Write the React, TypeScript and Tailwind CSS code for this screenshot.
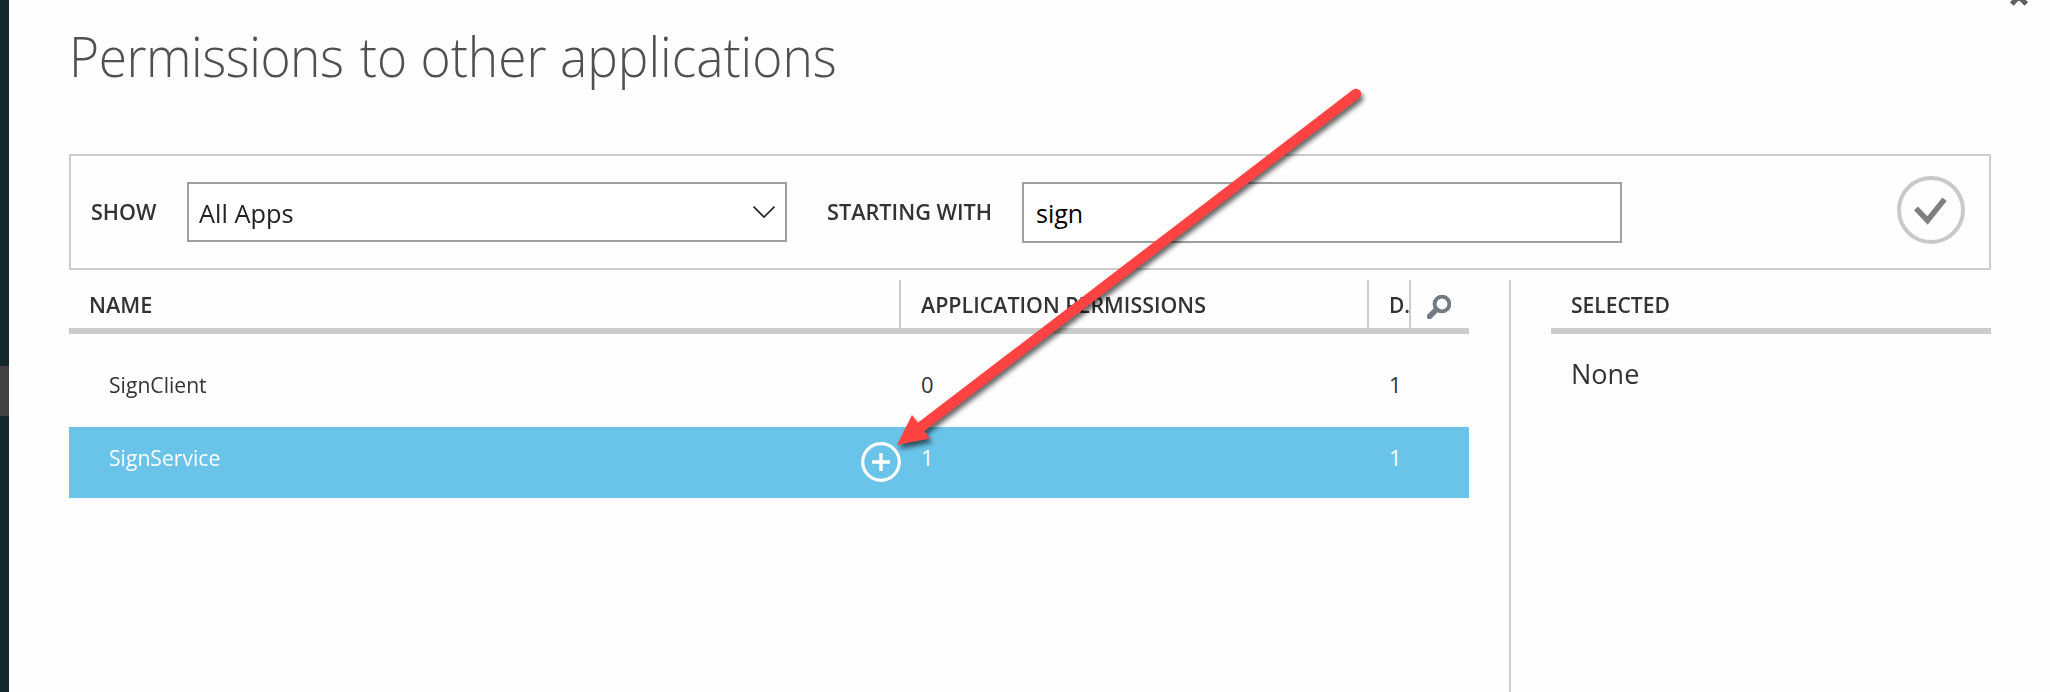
import type { ReactNode } from "react";

function Label({ children, className = "" }: { children: ReactNode; className?: string }) {
  return (
    <span className={`inline-block origin-left whitespace-nowrap text-[22px] font-semibold leading-[30px] text-[#333] ${className}`}>
      {children}
    </span>
  );
}

function Cell({ children, className = "" }: { children: ReactNode; className?: string }) {
  return <span className={`inline-block origin-left whitespace-nowrap text-[22px] leading-[30px] ${className}`}>{children}</span>;
}

function Row({ name, app, delegated, selected = false }: { name: string; app: string; delegated: string; selected?: boolean }) {
  return (
    <div className={`flex w-[1400px] items-center ${selected ? "h-[71px] bg-[#6ac3e9] pb-3 text-white" : "mt-5 h-[73px] pb-[14px] text-[#333]"}`}>
      <div className="flex w-[832px] items-center justify-between pl-[40px]">
        <Cell className="scale-x-[0.96]">{name}</Cell>
        {selected && (
          <svg className="mt-[5px] -mb-[5px]" width="40" height="40" viewBox="0 0 40 40" fill="none" stroke="#fff">
            <circle cx="20" cy="20" r="18.3" strokeWidth="3.2" />
            <path d="M11 20h18M20 11v18" strokeWidth="3.4" />
          </svg>
        )}
      </div>
      <Cell className="w-[468px] pl-[20px]">{app}</Cell>
      <Cell className="pl-[20px]">{delegated}</Cell>
    </div>
  );
}

export default function App() {
  return (
    <div className="relative flex h-[692px] w-[2050px] overflow-hidden bg-[#fefefe] font-['Open_Sans','Noto_Sans',sans-serif]">
      <aside className="w-[9px] shrink-0 bg-[#14272e] pt-[366px]">
        <div className="h-[50px] bg-[#434343]" />
      </aside>

      <main className="flex w-[1982px] flex-col pl-[60px]">
        <header className="h-[154px]">
          <h1 className="inline-block origin-left scale-x-[0.919] whitespace-nowrap text-[56px] font-light leading-[111px] text-[#505050]">
            <span className="mr-[3px] tracking-[-0.5px]">Permissions</span> to other applications
          </h1>
        </header>

        <section className="flex h-[116px] w-[1922px] shrink-0 items-start border-2 border-[#ccc]">
          <div className="flex h-[110px] w-[116px] items-center pl-[20px]">
            <Label className="scale-x-[0.98]">SHOW</Label>
          </div>
          <div className="mt-[26px] flex h-[60px] w-[600px] items-center justify-between border-2 border-[#a0a0a0] bg-white pr-[10px] pl-[10px]">
            <span className="mt-[2px] inline-block origin-left scale-x-[1.015] text-[25px] leading-[34px] text-[#222]">All Apps</span>
            <svg width="22" height="14" viewBox="0 0 22 14" fill="none" stroke="#222" strokeWidth="1.6">
              <path d="M0.5 1.5 11 12 21.5 1.5" />
            </svg>
          </div>
          <div className="flex h-[110px] w-[235px] items-center pl-[40px]">
            <Label className="scale-x-[0.985]">STARTING WITH</Label>
          </div>
          <div className="mt-[26px] flex h-[61px] w-[600px] items-center border-2 border-[#a0a0a0] bg-white pl-[12px]">
            <span className="inline-block origin-left text-[25px] leading-[34px] text-black">sign</span>
          </div>
          <svg className="mt-5 ml-[275px]" width="68" height="68" viewBox="0 0 68 68" fill="none">
            <circle cx="34" cy="34" r="32" stroke="#c9c9c9" strokeWidth="4" />
            <path d="M19 32.3 30.5 44.5 47.5 23.2" stroke="#808080" strokeWidth="5.5" />
          </svg>
        </section>

        <div className="mt-[10px] flex h-[412px]">
          <section className="w-[1400px]">
            <div className="flex h-[54px] items-stretch border-b-[6px] border-[#ccc]">
              <div className="flex w-[830px] items-center pl-[20px]">
                <Label className="scale-x-[0.985]">NAME</Label>
              </div>
              <div className="flex w-[468px] items-center border-l-2 border-[#ccc] pl-[20px]">
                <Label className="scale-x-[0.974]">APPLICATION PERMISSIONS</Label>
              </div>
              <div className="flex w-[42px] shrink-0 items-center border-l-2 border-[#ccc] pl-[20px]">
                <Label className="w-5 scale-x-[0.95]">D.</Label>
              </div>
              <div className="flex w-[60px] items-center border-l-2 border-[#ccc] pl-4">
                <svg className="mt-[6px]" width="24" height="24" viewBox="0 0 24 24" fill="none" stroke="#737b82">
                  <circle cx="15" cy="9" r="7.4" strokeWidth="3.9" />
                  <path d="M9.5 14.5 0.5 23.5" strokeWidth="5.6" />
                </svg>
              </div>
            </div>
            <Row name="SignClient" app="0" delegated="1" />
            <Row name="SignService" app="1" delegated="1" selected />
          </section>

          <aside className="ml-10 w-[482px] border-l-2 border-[#ccc] pl-10">
            <div className="flex h-[54px] items-center border-b-[6px] border-[#ccc] pl-[20px]">
              <Label className="scale-x-[0.957]">SELECTED</Label>
            </div>
            <p className="mt-5 pl-5 text-[28px] leading-[38px] text-[#333]">
              <span className="inline-block origin-left scale-x-[0.965]">None</span>
            </p>
          </aside>
        </div>
      </main>

      <svg className="absolute top-0 left-[2008px]" width="22" height="8" viewBox="0 0 22 8" fill="none" stroke="#606060" strokeWidth="5">
        <path d="M3.7 4 17 -9.3M18.3 4 5 -9.3" />
      </svg>

      <svg className="pointer-events-none absolute top-0 left-0" width="2050" height="692" viewBox="0 0 2050 692">
        <g fill="#ff4343" className="[filter:drop-shadow(2px_4px_2.5px_rgba(0,0,0,0.6))]">
          <path d="M1356 94 921 427" stroke="#ff4343" strokeWidth="10.4" strokeLinecap="round" />
          <path d="M897 445 912 415 930 438.5Z" />
        </g>
      </svg>
    </div>
  );
}
